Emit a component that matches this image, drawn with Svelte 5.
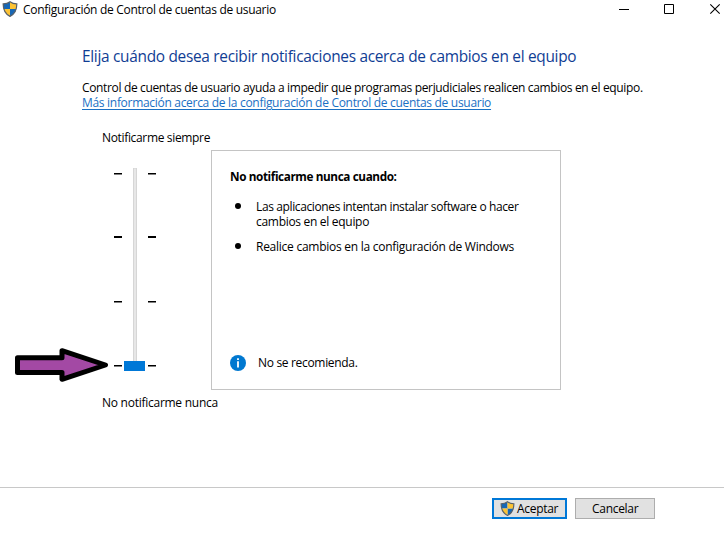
<script>
  const ticks = [
    { y: 5, h: 1.5 },
    { y: 68, h: 2 },
    { y: 133, h: 1.5 },
    { y: 197, h: 1.5 }
  ];
</script>

{#snippet shield(size)}
  <svg class="shield" width={size} height={size} viewBox="0 0 16 16" aria-hidden="true">
    <clipPath id="shape{size}"><path d="M8 .8C6 2.3 3.8 2.9 1.2 2.9C1.1 8.6 2.7 12.8 8 15.4C13.3 12.8 14.9 8.6 14.8 2.9C12.2 2.9 10 2.3 8 .8Z" /></clipPath>
    <g clip-path="url(#shape{size})">
      <path fill="#1767b5" d="M0 0H8V8H0ZM8 8H16V16H8Z" />
      <path fill="#fdc334" d="M8 0H16V8H8ZM0 8H8V16H0Z" />
    </g>
    <path d="M8 .8C6 2.3 3.8 2.9 1.2 2.9C1.1 8.6 2.7 12.8 8 15.4C13.3 12.8 14.9 8.6 14.8 2.9C12.2 2.9 10 2.3 8 .8Z" fill="none" stroke="#59616a" stroke-width="1.2" />
  </svg>
{/snippet}

<div class="window">
  <header>
    {@render shield(16)}
    <span class="title">Configuración de Control de cuentas de usuario</span>
    <svg class="controls" width="106" height="19" viewBox="0 0 106 19" fill="none" stroke="#000" aria-hidden="true">
      <path d="M1 9.5H11M46.500 4.500H55.500V13.500H46.500Z" />
      <path d="M92.300 4.300L101.700 13.700M101.700 4.300L92.300 13.700" stroke-width="1.1" />
    </svg>
  </header>

  <main>
    <h1>Elija cuándo desea recibir notificaciones acerca de cambios en el equipo</h1>
    <p class="intro">Control de cuentas de usuario ayuda a impedir que programas perjudiciales realicen cambios en el equipo.</p>
    <a href="#info">Más información acerca de la configuración de Control de cuentas de usuario</a>

    <div class="settings">
      <div class="level">
        <span class="top-label">Notificarme siempre</span>
        <div class="slider">
          <svg width="48" height="205" viewBox="0 0 48 205" aria-hidden="true">
            <path d="M19.500 0H22.500V195H19.500Z" fill="#e7e7e7" stroke="#d6d6d6" />
            {#each ticks as t}
              <path d="M0 {t.y}H8V{t.y + t.h}H0ZM34 {t.y}H42V{t.y + t.h}H34Z" />
            {/each}
            <path d="M10 193H31V203H10Z" fill="#0078d7" />
          </svg>
          <svg class="arrow" width="96" height="38" viewBox="0 0 96 38" aria-hidden="true">
            <path d="M3.500 11.800H48V4.700L91.500 19L48 33.300V26.500H3.500Z" fill="#a349a4" stroke="#000" stroke-width="5" stroke-linejoin="round" />
          </svg>
        </div>
        <span class="bottom-label">No notificarme nunca</span>
      </div>

      <section>
        <strong>No notificarme nunca cuando:</strong>
        <ul>
          <li><span class="wide">Las aplicaciones intentan instalar software o hacer</span><br />cambios en el equipo</li>
          <li><span class="narrow">Realice cambios en la configuración de Windows</span></li>
        </ul>
        <div class="note">
          <svg width="16" height="16" viewBox="0 0 16 16" aria-hidden="true">
            <circle cx="8" cy="8" r="8" fill="#0078d0" />
            <path d="M7.100 3.300H8.900V5H7.100ZM7.100 6.200H8.900V12.500H7.100Z" fill="#fff" />
          </svg>
          <span>No se recomienda.</span>
        </div>
      </section>
    </div>
  </main>

  <footer>
    <button class="accept">{@render shield(15)}<span>Aceptar</span></button>
    <button class="cancel"><span>Cancelar</span></button>
  </footer>
</div>

<style>
  :global(body) { margin: 0; background: #fff; }
  .window {
    width: 724px; height: 541px; overflow: hidden;
    display: flex; flex-direction: column;
    background: #fff; color: #000;
    font: 12px/15px "Open Sans", "Noto Sans", sans-serif;
    white-space: nowrap;
  }
  svg { display: block; flex: none; }
  header { display: flex; height: 19px; padding-left: 2px; align-items: flex-start; }
  header .shield { margin-top: 1px; }
  .title { margin: 2px 0 0 5px; letter-spacing: -0.3px; }
  .controls { margin-left: auto; }
  main { height: 468px; padding: 27px 0 0 82px; box-sizing: border-box; }
  h1 { margin: 0 0 12px; font-size: 15.4px; line-height: 22px; font-weight: 400; color: #103d94; letter-spacing: -0.29px; }
  p { margin: 0; letter-spacing: -0.35px; }
  a { display: block; width: max-content; color: #1a70c4; letter-spacing: -0.3px; text-underline-offset: 2px; }
  .settings { display: flex; margin-top: 20px; }
  .level { display: flex; flex-direction: column; width: 109px; padding-left: 20px; }
  .level > span { letter-spacing: -0.3px; }
  .level > .top-label { letter-spacing: -0.34px; }
  .level > .bottom-label { letter-spacing: -0.26px; }
  .slider { position: relative; height: 205px; margin: 23px 0 22px 12px; }
  .arrow { position: absolute; left: -100px; top: 178px; }
  section {
    width: 350px; height: 240px; margin-top: 20px; box-sizing: border-box;
    border: 1px solid #c4c4c4; padding: 18px 0 0 18px;
  }
  strong { display: block; font-size: 11.75px; letter-spacing: -0.4px; }
  ul { margin: 15px 0 0; padding: 0; list-style: none; height: 55px; }
  li { display: block; position: relative; padding-left: 26px; margin-bottom: 10px; letter-spacing: -0.3px; }
  li::before { content: ""; position: absolute; left: 5px; top: 4px; width: 6px; height: 6px; border-radius: 50%; background: #000; }
  .wide { letter-spacing: -0.38px; }
  .narrow { letter-spacing: -0.26px; }
  .note { display: flex; margin-top: 101px; gap: 12px; letter-spacing: -0.32px; }
  footer { display: flex; height: 54px; box-sizing: border-box; border-top: 1px solid #c8c8c8; padding: 10px 0 0 492px; gap: 8px; }
  button {
    display: flex; align-items: center; height: 21px; box-sizing: border-box; padding: 0;
    border: 1px solid #adadad; background: #e1e1e1; color: #000; font: inherit; letter-spacing: -0.3px;
  }
  .accept { width: 75px; border: 2px solid #0078d7; padding-left: 6px; gap: 2px; }
  .cancel { width: 80px; padding-left: 16px; }
</style>
